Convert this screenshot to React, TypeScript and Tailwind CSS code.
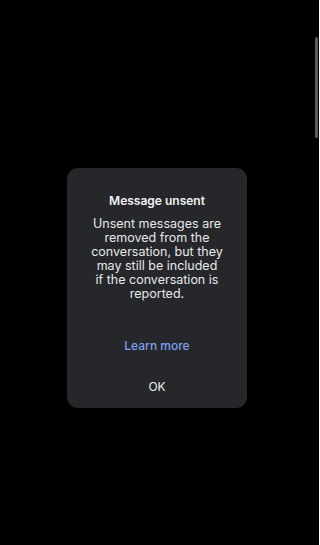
export default function App() {
  return (
    <div className="relative h-[545px] w-[319px] overflow-hidden bg-black font-['Inter',sans-serif]">
      {/* edge scroll indicator */}
      <div className="absolute right-[1px] top-[37px] h-[101px] w-[3px] rounded-full bg-[#5a5a5a]" />

      <div className="pl-[67px] pt-[168px]">
        <div className="flex h-[240px] w-[180px] flex-col items-center rounded-[11px] bg-[#25272b]">
          <div className="mt-[25px] text-[12px] font-semibold leading-[16px] text-[#f1f1f1]">
            Message unsent
          </div>
          <p className="mt-[8px] text-center text-[12.5px] leading-[14px] text-[#e8e8e8]">
            Unsent messages are
            <br />
            removed from the
            <br />
            conversation, but they
            <br />
            may still be included
            <br />
            if the conversation is
            <br />
            reported.
          </p>
          <button className="mt-[37px] text-[12px] font-medium leading-[16px] text-[#7f9ff0]">
            Learn more
          </button>
          <button className="mt-[25px] text-[12px] leading-[16px] text-[#efefef]">OK</button>
        </div>
      </div>
    </div>
  );
}
